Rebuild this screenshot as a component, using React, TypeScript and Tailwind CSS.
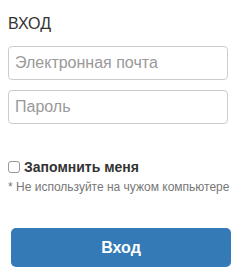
export default function App() {
  return (
    <div className="w-[237px] h-[278px] bg-white text-[#333] font-['Liberation_Sans',Arial,sans-serif] overflow-hidden">
      <div className="pt-[15px] pl-[8px] pr-[9px]">
        <h1 className="text-[16px] leading-[18px] font-normal">ВХОД</h1>

        <div className="mt-[13px] flex flex-col gap-[10px]">
          <input
            type="email"
            placeholder="Электронная почта"
            className="w-[220px] h-[34px] px-[6px] text-[16px] border border-[#ccc] rounded-[4px] placeholder:text-[#999] outline-none"
          />
          <input
            type="password"
            placeholder="Пароль"
            className="w-[220px] h-[34px] px-[6px] text-[16px] border border-[#ccc] rounded-[4px] placeholder:text-[#999] outline-none"
          />
        </div>

        {/* Remember me */}
        <label className="mt-[35px] flex items-center gap-[4px]">
          <span className="w-[12px] h-[12px] border border-[#999] rounded-[3px] bg-white" />
          <span className="text-[14px] leading-[16px] font-bold text-[#333]">Запомнить меня</span>
        </label>
        <p className="mt-[5px] text-[12px] leading-[14px] text-[#777] whitespace-nowrap">
          * Не используйте на чужом компьютере
        </p>
      </div>

      <div className="mt-[34px] pl-[11px]">
        <button className="w-[220px] h-[39px] rounded-[5px] bg-[#337ab7] text-white text-[16px] font-bold">
          Вход
        </button>
      </div>
    </div>
  );
}
